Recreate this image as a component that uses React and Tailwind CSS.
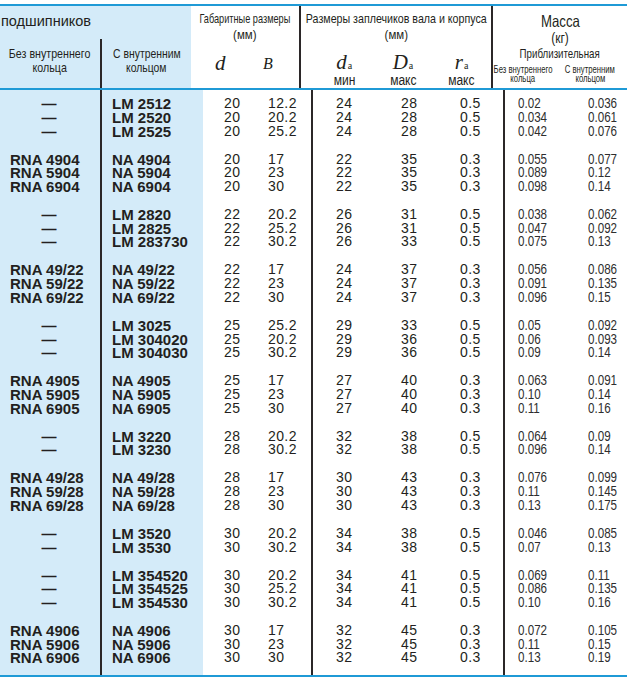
import React from 'react';

const groups = [
  [
    ['—', 'LM 2512', '20', '12.2', '24', '28', '0.5', '0.02', '0.036'],
    ['—', 'LM 2520', '20', '20.2', '24', '28', '0.5', '0.034', '0.061'],
    ['—', 'LM 2525', '20', '25.2', '24', '28', '0.5', '0.042', '0.076'],
  ],
  [
    ['RNA 4904', 'NA 4904', '20', '17', '22', '35', '0.3', '0.055', '0.077'],
    ['RNA 5904', 'NA 5904', '20', '23', '22', '35', '0.3', '0.089', '0.12'],
    ['RNA 6904', 'NA 6904', '20', '30', '22', '35', '0.3', '0.098', '0.14'],
  ],
  [
    ['—', 'LM 2820', '22', '20.2', '26', '31', '0.5', '0.038', '0.062'],
    ['—', 'LM 2825', '22', '25.2', '26', '31', '0.5', '0.047', '0.092'],
    ['—', 'LM 283730', '22', '30.2', '26', '33', '0.5', '0.075', '0.13'],
  ],
  [
    ['RNA 49/22', 'NA 49/22', '22', '17', '24', '37', '0.3', '0.056', '0.086'],
    ['RNA 59/22', 'NA 59/22', '22', '23', '24', '37', '0.3', '0.091', '0.135'],
    ['RNA 69/22', 'NA 69/22', '22', '30', '24', '37', '0.3', '0.096', '0.15'],
  ],
  [
    ['—', 'LM 3025', '25', '25.2', '29', '33', '0.5', '0.05', '0.092'],
    ['—', 'LM 304020', '25', '20.2', '29', '36', '0.5', '0.06', '0.093'],
    ['—', 'LM 304030', '25', '30.2', '29', '36', '0.5', '0.09', '0.14'],
  ],
  [
    ['RNA 4905', 'NA 4905', '25', '17', '27', '40', '0.3', '0.063', '0.091'],
    ['RNA 5905', 'NA 5905', '25', '23', '27', '40', '0.3', '0.10', '0.14'],
    ['RNA 6905', 'NA 6905', '25', '30', '27', '40', '0.3', '0.11', '0.16'],
  ],
  [
    ['—', 'LM 3220', '28', '20.2', '32', '38', '0.5', '0.064', '0.09'],
    ['—', 'LM 3230', '28', '30.2', '32', '38', '0.5', '0.096', '0.14'],
  ],
  [
    ['RNA 49/28', 'NA 49/28', '28', '17', '30', '43', '0.3', '0.076', '0.099'],
    ['RNA 59/28', 'NA 59/28', '28', '23', '30', '43', '0.3', '0.11', '0.145'],
    ['RNA 69/28', 'NA 69/28', '28', '30', '30', '43', '0.3', '0.13', '0.175'],
  ],
  [
    ['—', 'LM 3520', '30', '20.2', '34', '38', '0.5', '0.046', '0.085'],
    ['—', 'LM 3530', '30', '30.2', '34', '38', '0.5', '0.07', '0.13'],
  ],
  [
    ['—', 'LM 354520', '30', '20.2', '34', '41', '0.5', '0.069', '0.11'],
    ['—', 'LM 354525', '30', '25.2', '34', '41', '0.5', '0.086', '0.135'],
    ['—', 'LM 354530', '30', '30.2', '34', '41', '0.5', '0.10', '0.16'],
  ],
  [
    ['RNA 4906', 'NA 4906', '30', '17', '32', '45', '0.3', '0.072', '0.105'],
    ['RNA 5906', 'NA 5906', '30', '23', '32', '45', '0.3', '0.11', '0.15'],
    ['RNA 6906', 'NA 6906', '30', '30', '32', '45', '0.3', '0.13', '0.19'],
  ],
];

const sans = "font-['Liberation_Sans',Arial,sans-serif]";
const serif = "font-['Liberation_Serif','Times_New_Roman',serif]";

// one centred header line; the span may be wider than its column
function Line({ children, className = '' }) {
  return (
    <div className="flex justify-center">
      <span className={`shrink-0 whitespace-nowrap ${className}`}>{children}</span>
    </div>
  );
}

function Sym({ base }) {
  return (
    <span className={`${serif} italic text-[21px] leading-[20px] h-[20px] whitespace-nowrap`}>
      {base}
      <span className="not-italic text-[10px] leading-none ml-[1px]">a</span>
    </span>
  );
}

function Group({ rows }) {
  return (
    <div className="flex">
      <div className="w-[100px] bg-[#d4ebf9] py-[7.1px]">
        {rows.map((r, i) => (
          <div key={i} className={`h-[13.75px] leading-[13.75px] text-[15px] font-bold ${r[0] === '—' ? 'text-center pr-[2px]' : 'pl-[10px]'}`}>
            {r[0]}
          </div>
        ))}
      </div>
      <div className="w-[103px] bg-[#d4ebf9] border-l-2 border-[#2b2728] py-[7.1px] pl-[10px]">
        {rows.map((r, i) => (
          <div key={i} className="h-[13.75px] leading-[13.75px] text-[15px] font-bold">{r[1]}</div>
        ))}
      </div>
      <div className="w-[108px] py-[7.1px] pl-[21px] text-[14px] tracking-[0.4px]">
        {rows.map((r, i) => (
          <div key={i} className="flex h-[13.75px] leading-[13.75px]">
            <span className="w-[44px]">{r[2]}</span>
            <span>{r[3]}</span>
          </div>
        ))}
      </div>
      <div className="w-[192px] border-l-2 border-[#2b2728] py-[7.1px] pl-[23px] text-[14px] tracking-[0.4px]">
        {rows.map((r, i) => (
          <div key={i} className="flex h-[13.75px] leading-[13.75px]">
            <span className="w-[65px]">{r[4]}</span>
            <span className="w-[59px]">{r[5]}</span>
            <span>{r[6]}</span>
          </div>
        ))}
      </div>
      <div className="flex-1 border-l-2 border-[#2b2728] py-[7.1px] pl-[13px] text-[14px] text-[#2e2e2e]">
        {rows.map((r, i) => (
          <div key={i} className="flex h-[13.75px] leading-[13.75px]">
            <span className="w-[70px]">
              <span className="inline-block origin-left scale-x-[0.83]">{r[7]}</span>
            </span>
            <span className="inline-block origin-left scale-x-[0.83]">{r[8]}</span>
          </div>
        ))}
      </div>
    </div>
  );
}

export default function App() {
  return (
    <div className={`w-[627px] h-[678px] bg-white overflow-hidden pt-[4px] text-[#231f20] ${sans}`}>
      <div className="border-t-2 border-b-2 border-[#1f9ad6] flex h-[86px]">
        <div className="w-[203px] bg-[#d4ebf9] flex flex-col">
          <div className="h-[33px] pt-[7px] pl-[1px] text-[14.5px] leading-[16px] font-medium">подшипников</div>
          <div className="flex flex-1">
            <div className="w-[100px] pt-[8px] text-[13.5px] leading-[14px]">
              <Line className="scale-x-[0.79]">Без внутреннего</Line>
              <Line className="scale-x-[0.79]">кольца</Line>
            </div>
            <div className="flex-1 border-l-2 border-[#2b2728] pt-[8px] text-[13.5px] leading-[14px]">
              <Line className="scale-x-[0.77]">С внутренним</Line>
              <Line className="scale-x-[0.77]">кольцом</Line>
            </div>
          </div>
        </div>
        <div className="w-[108px] pt-[5px] text-[13.5px] leading-[16px]">
          <Line className="scale-x-[0.68]">Габаритные размеры</Line>
          <Line className="scale-x-[0.85]">(мм)</Line>
          <div className="flex mt-[9px] pl-[24px]">
            <span className={`${serif} italic text-[21px] leading-[22px] w-[48px]`}>d</span>
            <span className={`${serif} italic text-[16px] leading-[22px] mt-[1px]`}>B</span>
          </div>
        </div>
        <div className="w-[192px] border-l-2 border-[#2b2728] pt-[5px]">
          <div className="text-[13px] leading-[16px]">
            <Line className="scale-x-[0.82]">Размеры заплечиков вала и корпуса</Line>
            <Line className="scale-x-[0.88]">(мм)</Line>
          </div>
          <div className="flex mt-[9px] pl-[14px]">
            {[
              ['d', 'мин'],
              ['D', 'макс'],
              ['r', 'макс'],
            ].map(([b, l], i) => (
              <div key={i} className="w-[62px] flex flex-col items-center">
                <Sym base={b} />
                <span className="inline-block whitespace-nowrap text-[14px] leading-[14px] mt-[1px] scale-x-[0.86]">{l}</span>
              </div>
            ))}
          </div>
        </div>
        <div className="flex-1 border-l-2 border-[#2b2728] pt-[6px]">
          <div className="text-[16.5px] leading-[18px]">
            <Line className="scale-x-[0.8]">Масса</Line>
          </div>
          <div className="text-[15px] leading-[16px]">
            <Line className="scale-x-[0.8]">(кг)</Line>
          </div>
          <div className="text-[13.5px] leading-[14px] mt-[1px]">
            <Line className="scale-x-[0.72]">Приблизительная</Line>
          </div>
          <div className="flex text-[11px] leading-[9px] mt-[4px]">
            <div className="w-[60px] shrink-0">
              <Line className="scale-x-[0.7]">Без внутреннего</Line>
              <Line className="scale-x-[0.7]">кольца</Line>
            </div>
            <div className="w-[74px] shrink-0">
              <Line className="scale-x-[0.7]">С внутренним</Line>
              <Line className="scale-x-[0.7]">кольцом</Line>
            </div>
          </div>
        </div>
      </div>
      <div className="h-[587px] border-b-2 border-[#1f9ad6] flex flex-col">
        {groups.map((g, i) => (
          <Group key={i} rows={g} />
        ))}
        <div className="flex flex-1">
          <div className="w-[100px] bg-[#d4ebf9]" />
          <div className="w-[103px] bg-[#d4ebf9] border-l-2 border-[#2b2728]" />
          <div className="w-[108px]" />
          <div className="w-[192px] border-l-2 border-[#2b2728]" />
          <div className="flex-1 border-l-2 border-[#2b2728]" />
        </div>
      </div>
    </div>
  );
}
